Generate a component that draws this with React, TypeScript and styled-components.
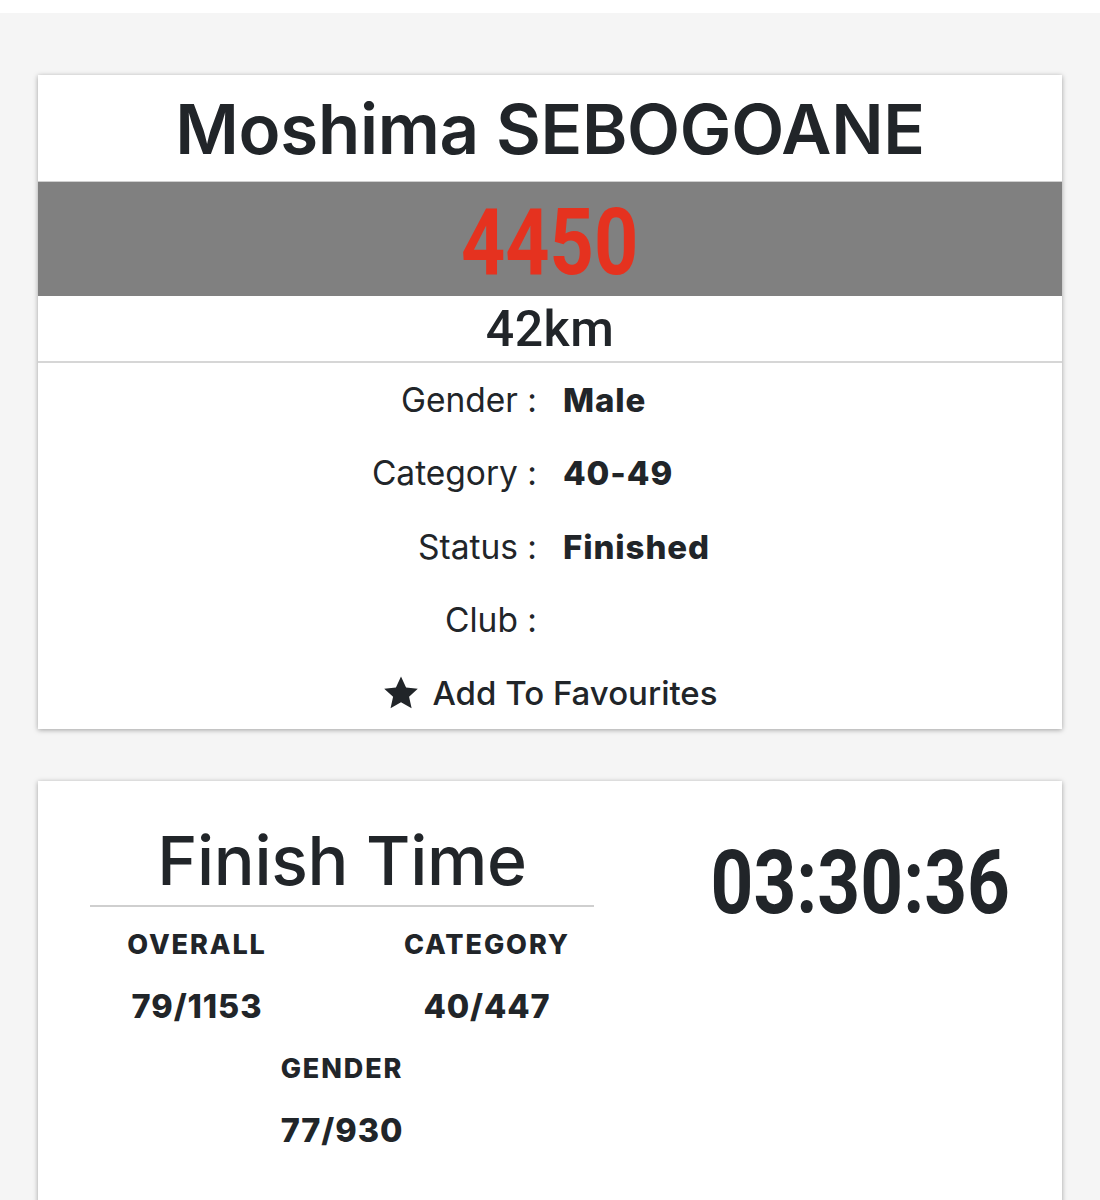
import React from "react";
import styled, { createGlobalStyle } from "styled-components";

const Global = createGlobalStyle`
  html, body { margin: 0; padding: 0; }
  body {
    background: #f5f5f5;
    font-family: Inter, "Noto Sans", sans-serif;
    color: #212529;
  }
`;

const Page = styled.div`
  border-top: 13px solid #ffffff;
  padding: 62px 38px 0 38px;
  display: flex;
  flex-direction: column;
  gap: 52px;
`;

const Card = styled.section`
  background: #ffffff;
  box-shadow: 0 1px 5px rgba(0, 0, 0, 0.35);
`;

const NameBar = styled.h1`
  margin: 0;
  height: 106px;
  display: flex;
  align-items: center;
  justify-content: center;
  font-size: 69px;
  font-weight: 600;
  letter-spacing: -0.3px;
  padding-top: 2px;
  box-sizing: border-box;
`;

const BibBand = styled.div`
  height: 115px;
  box-sizing: border-box;
  padding-top: 8px;
  background: #808080;
  border-top: 1px solid #cfcfcf;
  display: flex;
  align-items: center;
  justify-content: center;
`;

const Condensed = styled.span<{ $color: string; $size: number }>`
  display: inline-block;
  font-family: Roboto, "Liberation Sans", sans-serif;
  font-weight: 700;
  font-size: ${(p) => p.$size}px;
  line-height: 1;
  color: ${(p) => p.$color};
  transform: scaleX(0.84);
`;

const Distance = styled.div`
  height: 65px;
  display: flex;
  align-items: center;
  justify-content: center;
  font-family: Roboto, "Liberation Sans", sans-serif;
  font-weight: 500;
  font-size: 50px;
  letter-spacing: 0.5px;
  border-bottom: 2px solid #d6d6d6;
`;

const InfoRow = styled.div`
  height: 73.5px;
  display: grid;
  grid-template-columns: 1fr 1fr;
  column-gap: 26px;
  align-items: center;
`;

const Label = styled.span`
  text-align: right;
  font-size: 33.5px;
  font-weight: 400;
`;

const Value = styled.span`
  font-size: 33px;
  font-weight: 800;
  letter-spacing: 0.9px;
`;

const FavRow = styled.div`
  height: 72px;
  display: flex;
  align-items: center;
  justify-content: center;
  gap: 12px;
  font-size: 33px;
  font-weight: 500;
`;

const TimeCard = styled(Card)`
  display: grid;
  grid-template-columns: 504px 1fr;
  padding-left: 52px;
  padding-bottom: 60px;
`;

const LeftCol = styled.div`
  display: flex;
  flex-direction: column;
`;

const FinishTitle = styled.h2`
  margin: 0;
  height: 126px;
  box-sizing: border-box;
  display: flex;
  align-items: flex-end;
  justify-content: center;
  padding-bottom: 4px;
  font-size: 68px;
  font-weight: 500;
  border-bottom: 2px solid #cfcfcf;
  letter-spacing: -0.3px;
`;

const RankGrid = styled.div`
  display: grid;
  grid-template-columns: 1fr 1fr;
  margin: 0 -38px;
  padding-top: 6px;
`;

const Rank = styled.div<{ $span?: boolean }>`
  display: flex;
  flex-direction: column;
  align-items: center;
  grid-column: ${(p) => (p.$span ? "1 / span 2" : "auto")};
`;

const RankLabel = styled.div`
  height: 62px;
  display: flex;
  align-items: center;
  font-size: 27px;
  font-weight: 800;
  letter-spacing: 1.9px;
  text-transform: uppercase;
`;

const RankValue = styled.div`
  height: 62px;
  display: flex;
  align-items: center;
  font-size: 32.5px;
  font-weight: 800;
  letter-spacing: 0.9px;
`;

const RightCol = styled.div`
  display: flex;
  justify-content: center;
  align-items: flex-start;
  padding-left: 64px;
  padding-top: 57px;
`;

const Star = () => (
  <svg width="38" height="38" viewBox="0 0 24 24" aria-hidden="true">
    <path
      fill="#212529"
      d="M12 1.6l3.2 6.9 7.4.8-5.5 5 1.6 7.4L12 17.9l-6.6 3.8L7 14.3 1.4 9.3l7.4-.8z"
    />
  </svg>
);

const info: [string, string][] = [
  ["Gender :", "Male"],
  ["Category :", "40-49"],
  ["Status :", "Finished"],
  ["Club :", ""],
];

export default function App() {
  return (
    <>
      <Global />
      <Page>
        <Card>
          <NameBar>Moshima SEBOGOANE</NameBar>
          <BibBand>
            <Condensed $color="#e5321f" $size={92}>
              4450
            </Condensed>
          </BibBand>
          <Distance>42km</Distance>
          {info.map(([l, v]) => (
            <InfoRow key={l}>
              <Label>{l}</Label>
              <Value>{v}</Value>
            </InfoRow>
          ))}
          <FavRow>
            <Star />
            <span>Add To Favourites</span>
          </FavRow>
        </Card>
        <TimeCard>
          <LeftCol>
            <FinishTitle>Finish Time</FinishTitle>
            <RankGrid>
              <Rank>
                <RankLabel>Overall</RankLabel>
                <RankValue>79/1153</RankValue>
              </Rank>
              <Rank>
                <RankLabel>Category</RankLabel>
                <RankValue>40/447</RankValue>
              </Rank>
              <Rank $span>
                <RankLabel>Gender</RankLabel>
                <RankValue>77/930</RankValue>
              </Rank>
            </RankGrid>
          </LeftCol>
          <RightCol>
            <Condensed $color="#212529" $size={89}>
              03:30:36
            </Condensed>
          </RightCol>
        </TimeCard>
      </Page>
    </>
  );
}
